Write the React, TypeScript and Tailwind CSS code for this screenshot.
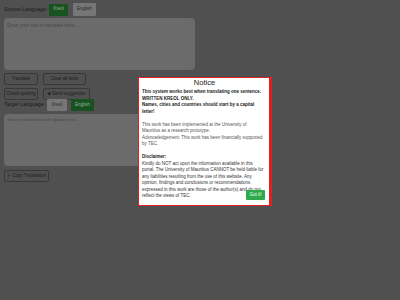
import React from "react";

const Btn = ({ w, children }: { w: string; children: React.ReactNode }) => (
  <div className={`${w} h-[12px] border border-[#383838] rounded-[2px] flex items-center justify-center text-[4.5px] text-[#1c1c1c] leading-none whitespace-nowrap`}>
    {children}
  </div>
);

export default function App() {
  return (
    <div className="relative w-[400px] h-[300px] bg-[#505050] overflow-hidden font-['Liberation_Sans',Arial,sans-serif]">
      <div className="flex flex-col pl-[4px] pt-[3px] w-[195px]">
        <div className="flex items-center h-[13px]">
          <span className="text-[5.3px] text-[#1a1a1a] w-[45px] whitespace-nowrap">Source Language:</span>
          <div className="w-[19px] h-[12px] bg-[#17521f] rounded-[1px] flex items-center justify-center text-[4.5px] text-[#9ab09d]">Kreol</div>
          <div className="ml-[5px] w-[23px] h-[13px] bg-[#767676] rounded-[1px] flex items-center justify-center text-[4.5px] text-[#2a2a2a]">English</div>
        </div>
        <div className="mt-[2px] h-[52px] bg-[#6b6b6b] rounded-[4px] px-[3px] pt-[4px] text-[4.8px] text-[#484848]">
          Enter your text to translate here...
        </div>
        <div className="flex gap-[5px] mt-[3px]">
          <Btn w="w-[34px]">Translate</Btn>
          <Btn w="w-[43px]">Clear all texts</Btn>
        </div>
        <div className="flex gap-[5px] mt-[3px]">
          <Btn w="w-[34px]">Check spelling</Btn>
          <Btn w="w-[47px]">
            <svg viewBox="0 0 16 16" className="w-[4px] h-[4px] mr-[1px]" fill="#1c1c1c">
              <path d="M15.8.2a.5.5 0 0 1 .1.6l-6 14a.5.5 0 0 1-.9 0L6.7 9.3 1.2 7a.5.5 0 0 1 0-.9l14-6a.5.5 0 0 1 .6.1z" />
            </svg>
            Send suggestion
          </Btn>
        </div>
        <div className="flex items-center h-[12px] mt-[-1px]">
          <span className="text-[5.3px] text-[#1a1a1a] w-[43px] whitespace-nowrap">Target Language:</span>
          <div className="w-[20px] h-[12px] bg-[#767676] rounded-[1px] flex items-center justify-center text-[4.5px] text-[#2a2a2a]">Kreol</div>
          <div className="ml-[4px] w-[23px] h-[12px] bg-[#17521f] rounded-[1px] flex items-center justify-center text-[4.5px] text-[#9ab09d]">English</div>
        </div>
        <div className="mt-[3px] h-[52px] bg-[#6b6b6b] rounded-[4px] px-[3px] pt-[3px] text-[4.3px] text-[#484848]">
          Your translated text will appear here...
        </div>
        <div className="flex mt-[4px]">
          <Btn w="w-[45px]">✓ Copy Translation</Btn>
        </div>
      </div>

      <div className="absolute left-[138px] top-[77px] w-[134px] h-[129px] bg-white border border-[#e02020] border-r-[3px] pl-[3px] pr-[2px] text-[4.5px] leading-[6.5px] text-[#1a1a1a] whitespace-nowrap">
        <div className="text-center text-[7.5px] leading-[9px] text-[#1a1a1a]">Notice</div>
        <div className="font-bold mt-[2px]">
          This system works best when translating one sentence.<br />
          WRITTEN KREOL ONLY.<br />
          Names, cities and countries should start by a capital<br />
          letter!
        </div>
        <div className="mt-[6.5px] text-[#555]">
          This work has been implemented at the University of<br />
          Mauritius as a research prototype.<br />
          Acknowledgement: This work has been financially supported<br />
          by TEC.
        </div>
        <div className="mt-[6.5px] font-bold">Disclaimer:</div>
        <div className="text-[#333]">
          Kindly do NOT act upon the information available in this<br />
          portal. The University of Mauritius CANNOT be held liable for<br />
          any liabilities resulting from the use of this website. Any<br />
          opinion, findings and conclusions or recommendations<br />
          expressed in this work are those of the author(s) and do not<br />
          reflect the views of TEC.
        </div>
        <div className="absolute left-[107px] top-[112px] w-[19px] h-[10px] bg-[#2eaa4c] rounded-[1px] flex items-center justify-center text-white text-[4.5px]">Got it!</div>
      </div>
    </div>
  );
}
